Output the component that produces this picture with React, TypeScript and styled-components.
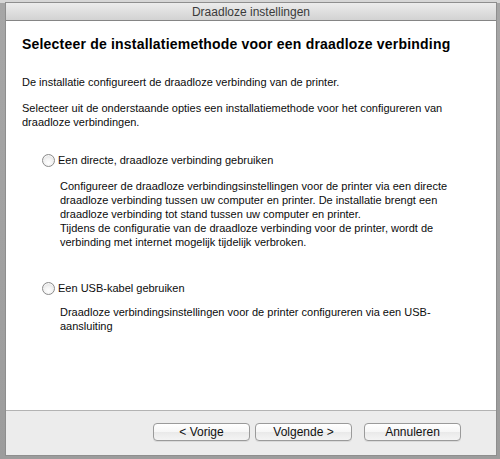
import React, { useState } from "react";
import styled, { createGlobalStyle } from "styled-components";

const GlobalStyle = createGlobalStyle`
  html, body {
    margin: 0;
    padding: 0;
    height: 100%;
  }
  body {
    font-family: "Liberation Sans", Arial, sans-serif;
    background: #a4a4a4;
  }
  #root {
    height: 100%;
  }
`;

const Desktop = styled.div`
  box-sizing: border-box;
  height: 459px;
  width: 500px;
  padding: 3px 4px 4px 6px;
  background: linear-gradient(to bottom, #d6d6d6 0, #d6d6d6 3px, #a6a6a6 3px, #9c9c9c 100%);
`;

const Window = styled.div`
  display: flex;
  flex-direction: column;
  height: 100%;
  background: #ececec;
  box-shadow: 0 0 0 1px #8e8e8e;
`;

const TitleBar = styled.div`
  flex: 0 0 17px;
  display: flex;
  align-items: center;
  justify-content: center;
  background: linear-gradient(to bottom, #ececec, #d2d2d2);
  border-bottom: 1px solid #858585;
  font-size: 12px;
  color: #3a3a3a;
`;

const Content = styled.div`
  flex: 0 0 390px;
  box-sizing: border-box;
  background: #fff;
  border-bottom: 1px solid #b3b3b3;
  padding: 15px 16px 0;
  color: #0c0c0c;
  font-size: 11px;
  line-height: 14px;
`;

const Heading = styled.h1`
  margin: 0 0 22px;
  font-size: 14px;
  line-height: 17px;
  letter-spacing: 0.2px;
  font-weight: bold;
  color: #000;
`;

const Paragraph = styled.p<{ $gap?: number }>`
  margin: 0 0 ${(p) => p.$gap ?? 0}px;
`;

const Option = styled.label<{ $gap: number }>`
  display: flex;
  align-items: center;
  gap: 3px;
  margin: 0 0 ${(p) => p.$gap}px 20px;
  cursor: default;
`;

const RadioCircle = styled.span<{ $checked: boolean }>`
  box-sizing: border-box;
  width: 13px;
  height: 13px;
  border-radius: 50%;
  border: 1px solid #8b8b8b;
  background: radial-gradient(circle at 50% 70%, #ffffff 0, #f2f2f2 45%, #d4d4d4 100%);
  box-shadow: inset 0 1px 1px rgba(255, 255, 255, 0.9);
  display: flex;
  align-items: center;
  justify-content: center;

  &::after {
    content: "";
    width: 5px;
    height: 5px;
    border-radius: 50%;
    background: #222;
    display: ${(p) => (p.$checked ? "block" : "none")};
  }
`;

const Description = styled.p<{ $gap?: number }>`
  margin: 0 0 ${(p) => p.$gap ?? 0}px 38px;
`;

const Footer = styled.div`
  flex: 1;
  display: flex;
  justify-content: flex-end;
  align-items: flex-start;
  padding: 12px 35px 0 0;
  gap: 5px;
`;

const Button = styled.button<{ $spaced?: boolean }>`
  box-sizing: border-box;
  width: 97px;
  height: 18px;
  margin-left: ${(p) => (p.$spaced ? 7 : 0)}px;
  padding: 0;
  border: 1px solid #9a9a9a;
  border-radius: 4px;
  background: linear-gradient(to bottom, #ffffff 0, #f6f6f6 50%, #e9e9e9 51%, #f4f4f4 100%);
  box-shadow: 0 1px 0 rgba(0, 0, 0, 0.08);
  font-family: inherit;
  font-size: 12px;
  color: #111;
`;

const App = () => {
  const [choice, setChoice] = useState<string | null>(null);

  return (
    <>
      <GlobalStyle />
      <Desktop>
        <Window>
          <TitleBar>Draadloze instellingen</TitleBar>
          <Content>
            <Heading>Selecteer de installatiemethode voor een draadloze verbinding</Heading>
            <Paragraph $gap={12}>
              De installatie configureert de draadloze verbinding van de printer.
            </Paragraph>
            <Paragraph $gap={24}>
              Selecteer uit de onderstaande opties een installatiemethode voor het configureren van
              <br />
              draadloze verbindingen.
            </Paragraph>

            <Option $gap={12} onClick={() => setChoice("direct")}>
              <RadioCircle $checked={choice === "direct"} />
              Een directe, draadloze verbinding gebruiken
            </Option>
            <Description $gap={32}>
              Configureer de draadloze verbindingsinstellingen voor de printer via een directe
              <br />
              draadloze verbinding tussen uw computer en printer. De installatie brengt een
              <br />
              draadloze verbinding tot stand tussen uw computer en printer.
              <br />
              Tijdens de configuratie van de draadloze verbinding voor de printer, wordt de
              <br />
              verbinding met internet mogelijk tijdelijk verbroken.
            </Description>

            <Option $gap={10} onClick={() => setChoice("usb")}>
              <RadioCircle $checked={choice === "usb"} />
              Een USB-kabel gebruiken
            </Option>
            <Description>
              Draadloze verbindingsinstellingen voor de printer configureren via een USB-
              <br />
              aansluiting
            </Description>
          </Content>
          <Footer>
            <Button>&lt; Vorige</Button>
            <Button>Volgende &gt;</Button>
            <Button $spaced>Annuleren</Button>
          </Footer>
        </Window>
      </Desktop>
    </>
  );
};

export default App;
